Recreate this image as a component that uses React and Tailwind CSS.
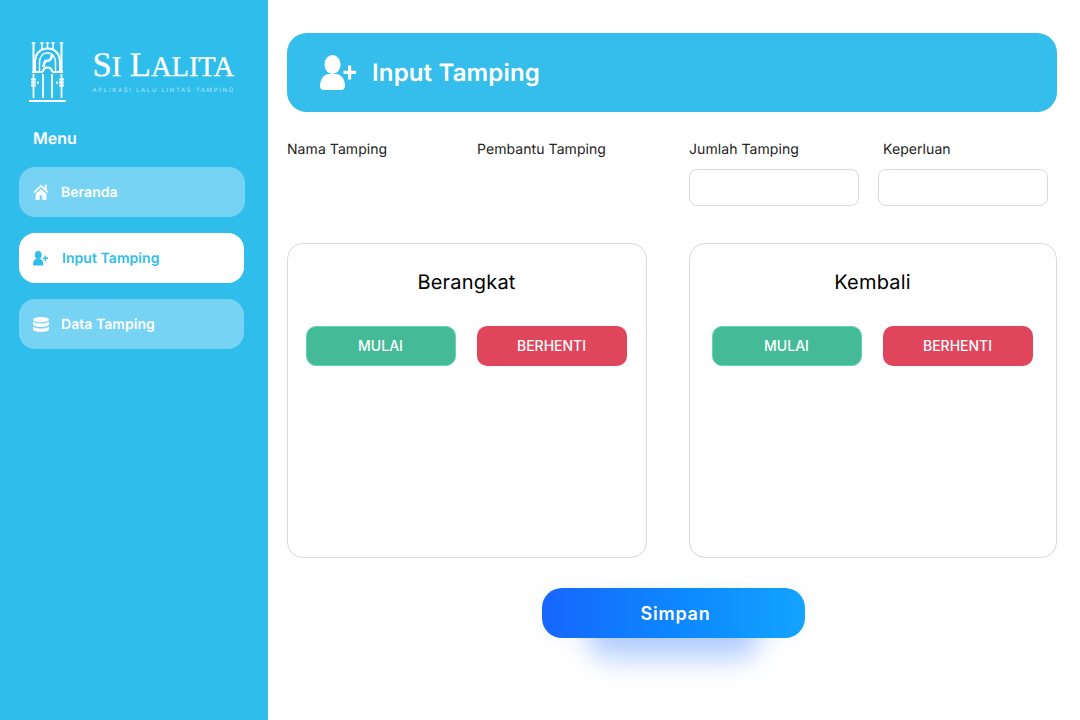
import React from "react";

const UserPlus = ({ className }) => (
  <svg viewBox="0 0 36 36" className={className} fill="currentColor">
    <ellipse cx="12.500" cy="9.500" rx="8" ry="9.500" />
    <path d="M0 31c0-7 4-12 9-12h7c5 0 9 5 9 12 0 2.800-1.500 4-4 4H4c-2.500 0-4-1.200-4-4z" />
    <path d="M28 10.500h3.200v5.300h4.800V19h-4.800v5.500H28V19h-4.500v-3.200H28z" />
  </svg>
);

const Home = ({ className }) => (
  <svg viewBox="0 0 16 16" className={className} fill="currentColor">
    <path d="M8 5 2.600 10.100V16h4v-4.500h2.800V16h4v-5.900z" />
    <path d="M8 .8.300 8.100l1 1.100L8 3l6.700 6.200 1-1.100-2-1.900V.8h-2v3.500z" />
  </svg>
);

const Database = ({ className }) => (
  <svg viewBox="0 0 16 15" className={className} fill="currentColor">
    <ellipse cx="8" cy="2.700" rx="8" ry="2.700" />
    <path d="M0 4.500C1.500 5.900 4.500 6.500 8 6.500s6.500-.6 8-2v2.800C16 8.800 12.500 10 8 10S0 8.800 0 7.300z" />
    <path d="M0 9.500c1.500 1.400 4.500 2 8 2s6.500-.6 8-2v2.800C16 13.800 12.500 15 8 15s-8-1.200-8-2.700z" />
  </svg>
);

const Logo = () => (
  <svg viewBox="0 0 37 60" className="w-[37px] h-[60px] shrink-0" fill="none" stroke="white" strokeWidth="2">
    <path d="M4.500 0v30M32.500 0v30" />
    <path d="M13 0v7M18.500 0v6M24 0v7" strokeWidth="1.500" />
    <path d="M2.500 1h4M30.500 1h4M11 1h4M16.500 1h4M22 1h4" strokeWidth="1.200" />
    <path d="M6 29V20C6 12 11 6.500 18.500 6.500S31 12 31 20v9" />
    <path d="M10.500 29V21C10.500 15 13.500 11 18.500 11S26.500 15 26.500 21v8" strokeWidth="1.400" />
    <path d="M3 30h11M23 30h11" />
    <path d="M14 30c0-3 2-4.500 4.500-4.500S23 27 23 30" />
    <path d="M22.500 12.500c1 4-2 7-6 6.500-1.500 1.800-2 3.800-2 6" strokeWidth="2.600" />
    <path d="M4.500 32v24M14 32v24M23 32v24M32.500 32v24" strokeWidth="1.800" />
    <path d="M2 37.500h5M2 40.500h5M2 43.500h5M30 37.500h5M30 40.500h5M30 43.500h5" strokeWidth="2" />
    <path d="M9 39.500v2.500M28 39.500v2.500" strokeWidth="1.800" />
    <path d="M0 59h37" strokeWidth="2" />
  </svg>
);

const NavItem = ({ icon, label, active, w, gap }) => (
  <div
    className={`h-[50px] rounded-[16px] flex items-center pl-[14px] text-[14px] leading-[18px] font-semibold tracking-[0.05px] ${w} ${gap} ${
      active ? "bg-white text-[#30bdec]" : "bg-[#77d3f4] text-white"
    }`}
  >
    {icon}
    <span className="translate-y-[1px]">{label}</span>
  </div>
);

const Sidebar = () => (
  <aside className="w-[268px] shrink-0 bg-[#2fbdec] min-h-[720px] pt-[42px] pl-[19px]">
    <div className="flex items-start pl-[10px] gap-[27px]">
      <Logo />
      <div className="pt-[4px] text-white -ml-[0.5px]">
        <div className="font-['Liberation_Serif',serif] text-[34.5px] leading-[38px] whitespace-nowrap [-webkit-text-stroke:0.3px_white]">
          S<span className="text-[28.500px]">I</span> L<span className="text-[28.500px]">ALITA</span>
        </div>
        <div className="text-[6px] leading-[8px] tracking-[1.68px] whitespace-nowrap text-[#b5e6f8]">
          APLIKASI LALU LINTAS TAMPING
        </div>
      </div>
    </div>
    <div className="mt-[26px] pl-[14px] text-[16px] leading-[20px] font-semibold text-white">Menu</div>
    <nav className="mt-[19px] flex flex-col gap-[16px]">
      <NavItem w="w-[226px]" gap="gap-[12px]" label="Beranda" icon={<Home className="w-[16px] h-[16px]" />} />
      <NavItem w="w-[225px]" gap="gap-[14px]" active label="Input Tamping" icon={<UserPlus className="w-[15px] h-[15px]" />} />
      <NavItem w="w-[225px]" gap="gap-[12px]" label="Data Tamping" icon={<Database className="w-[16px] h-[15px]" />} />
    </nav>
  </aside>
);

const Action = ({ className, children }) => (
  <button className={`w-[150px] h-[40px] pr-[1px] rounded-[10px] text-white text-[14px] font-medium ${className}`}>
    <span className="block -translate-y-[1px]">{children}</span>
  </button>
);

const Card = ({ title, className, gapClass }) => (
  <div className={`h-[315px] rounded-[16px] border border-[#d5d9e6] bg-white ${className}`}>
    <h2 className="text-center text-[20px] leading-[24px] tracking-[0.2px] text-black pt-[26px] pr-[1px]">{title}</h2>
    <div className={`mt-[32px] flex gap-[21px] ${gapClass}`}>
      <Action className="bg-[#44bb96] border border-[#5fd6ae]">MULAI</Action>
      <Action className="bg-[#e0465b]">BERHENTI</Action>
    </div>
  </div>
);

export default function App() {
  return (
    <div className="flex w-[1080px] h-[720px] overflow-hidden bg-white font-['Inter',sans-serif] [text-rendering:geometricPrecision]">
      <Sidebar />
      <main className="flex-1 pl-[19px] pr-[23px] pt-[33px]">
        <header className="h-[79px] rounded-[20px] bg-[#35bdeb] flex items-center pl-[33px] gap-[16px] text-white">
          <UserPlus className="w-[36px] h-[36px]" />
          <h1 className="text-[24px] font-semibold tracking-[0.15px]">Input Tamping</h1>
        </header>

        <div className="mt-[29px] flex text-[14px] leading-[18px] tracking-[0.07px] text-[#222]">
          <div className="w-[190px]">Nama Tamping</div>
          <div className="w-[212px]">Pembantu Tamping</div>
          <div className="w-[189px]">
            <div>Jumlah Tamping</div>
            <div className="mt-[10px] w-[170px] h-[37px] rounded-[8px] border border-[#d5d9e6]" />
          </div>
          <div>
            <div className="pl-[5px]">Keperluan</div>
            <div className="mt-[10px] w-[170px] h-[37px] rounded-[8px] border border-[#d5d9e6]" />
          </div>
        </div>

        <div className="mt-[37px] flex gap-[42px]">
          <Card title="Berangkat" className="w-[360px]" gapClass="pl-[18px]" />
          <Card title="Kembali" className="w-[368px]" gapClass="pl-[22px]" />
        </div>

        <div className="mt-[30px] flex justify-center">
          <div className="relative isolate ml-[2px]">
            <div className="absolute left-[46px] right-[46px] top-[22px] h-[50px] rounded-[20px] bg-[#1766fc]/30 blur-[13px] -z-10" />
            <button className="block w-[263px] h-[50px] pl-[5px] rounded-[20px] bg-gradient-to-r from-[#1766fc] to-[#14a3ff] text-white text-[18px] font-semibold tracking-[0.75px] shadow-[0_0_20px_rgba(23,102,252,0.06)]">
              Simpan
            </button>
          </div>
        </div>
      </main>
    </div>
  );
}
